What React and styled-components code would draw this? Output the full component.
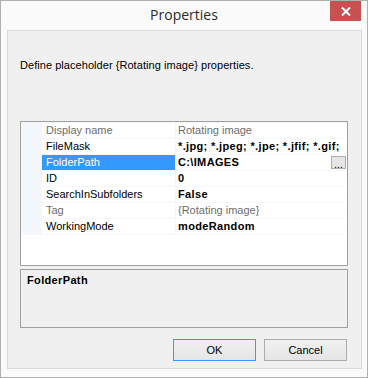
import React from "react";
import styled, { createGlobalStyle } from "styled-components";

const Global = createGlobalStyle`
  html, body { margin: 0; padding: 0; background: #ffffff; }
  body { font-family: "Liberation Sans", Arial, sans-serif; }
  * { box-sizing: border-box; }
`;

const Window = styled.div`
  width: 368px;
  height: 378px;
  border: 1px solid #b0b0b0;
  background: #fafafa;
  display: flex;
  flex-direction: column;
`;

const TitleBar = styled.div`
  height: 29px;
  display: grid;
  grid-template-columns: 1fr auto 1fr;
  align-items: start;
  padding-right: 6px;
`;

const Title = styled.div`
  grid-column: 2;
  font-family: "Open Sans", "Noto Sans", sans-serif;
  font-size: 14px;
  color: #2b2b2b;
  line-height: 28px;
  padding-left: 6px;
`;

const CloseButton = styled.div`
  grid-column: 3;
  justify-self: end;
  width: 31px;
  height: 20px;
  background: #c75050;
  display: flex;
  align-items: center;
  justify-content: center;
`;

const Client = styled.div`
  flex: 1;
  margin: 0 5px 8px 6px;
  border: 1px solid #dadada;
  background: #f0f0f0;
  display: flex;
  flex-direction: column;
  padding: 0 13px 7px 12px;
  font-family: "Liberation Sans", Arial, sans-serif;
  font-size: 11px;
  color: #000;
`;

const Description = styled.div`
  margin-top: 28px;
  height: 13px;
  line-height: 13px;
  letter-spacing: 0.05px;
`;

const Grid = styled.div`
  margin-top: 49px;
  height: 145px;
  border: 1px solid #a0a0a0;
  background: #ffffff;
  display: flex;
  flex-direction: column;
`;

const Rows = styled.div`
  border-top: 1px solid #f4f7fc;
`;

const Row = styled.div`
  display: grid;
  grid-template-columns: 21px 133px 1px 171px;
  height: 16px;
  border-bottom: 1px solid #f4f7fc;
`;

const Gutter = styled.div`
  background: #f4f7fc;
`;

const Sep = styled.div`
  background: #f4f7fc;
`;

const NameCell = styled.div`
  padding-left: 4px;
  line-height: 15px;
  white-space: nowrap;
  overflow: hidden;
  background: ${(p) => (p.$selected ? "#3399ff" : "transparent")};
  color: ${(p) => (p.$selected ? "#ffffff" : p.$readOnly ? "#6d6d6d" : "#000000")};
`;

const ValueCell = styled.div`
  display: flex;
  align-items: flex-start;
  justify-content: space-between;
  padding-left: 2px;
  line-height: 15px;
  white-space: nowrap;
  overflow: hidden;
  font-weight: ${(p) => (p.$bold ? 700 : 400)};
  letter-spacing: ${(p) => (p.$bold ? "0.35px" : "0")};
  color: ${(p) => (p.$readOnly ? "#6d6d6d" : "#000000")};
`;

const EllipsisButton = styled.div`
  width: 15px;
  height: 13px;
  margin: 1px 1px 0 0;
  border: 1px solid #adadad;
  background: #e5e5e5;
  font-weight: 400;
  letter-spacing: 0;
  font-size: 11px;
  line-height: 14px;
  text-align: center;
  color: #000;
  flex-shrink: 0;
`;

const HelpPane = styled.div`
  margin-top: 3px;
  height: 59px;
  border: 1px solid #a0a0a0;
  background: #f0f0f0;
  padding: 3px 0 0 6px;
  font-weight: 700;
  letter-spacing: 0.35px;
  line-height: 14px;
`;

const ButtonRow = styled.div`
  margin-top: auto;
  display: flex;
  justify-content: flex-end;
  gap: 8px;
  padding-right: 1px;
`;

const Button = styled.div`
  width: 83px;
  height: 22px;
  border: 1px solid ${(p) => (p.$default ? "#3c9af5" : "#acacac")};
  background: linear-gradient(#f0f0f0, #e5e5e5);
  display: flex;
  align-items: center;
  justify-content: center;
  font-size: 11px;
  color: #000;
`;

const rows = [
  { name: "Display name", value: "Rotating image", readOnly: true },
  { name: "FileMask", value: "*.jpg; *.jpeg; *.jpe; *.jfif; *.gif;", bold: true },
  { name: "FolderPath", value: "C:\\IMAGES", bold: true, selected: true, button: true },
  { name: "ID", value: "0", bold: true },
  { name: "SearchInSubfolders", value: "False", bold: true },
  { name: "Tag", value: "{Rotating image}", readOnly: true },
  { name: "WorkingMode", value: "modeRandom", bold: true },
];

export default function App() {
  return (
    <>
      <Global />
      <Window>
        <TitleBar>
          <Title>Properties</Title>
          <CloseButton>
            <svg width="10" height="9" viewBox="0 0 10 9">
              <path d="M1 0.5 L9 8.5 M9 0.5 L1 8.5" stroke="#ffffff" strokeWidth="2" fill="none" />
            </svg>
          </CloseButton>
        </TitleBar>
        <Client>
          <Description>Define placeholder {"{Rotating image}"} properties.</Description>
          <Grid>
            <Rows>
              {rows.map((r) => (
                <Row key={r.name}>
                  <Gutter />
                  <NameCell $selected={r.selected} $readOnly={r.readOnly}>
                    {r.name}
                  </NameCell>
                  <Sep />
                  <ValueCell $bold={r.bold} $readOnly={r.readOnly}>
                    <span>{r.value}</span>
                    {r.button && <EllipsisButton>...</EllipsisButton>}
                  </ValueCell>
                </Row>
              ))}
            </Rows>
          </Grid>
          <HelpPane>FolderPath</HelpPane>
          <ButtonRow>
            <Button $default>OK</Button>
            <Button>Cancel</Button>
          </ButtonRow>
        </Client>
      </Window>
    </>
  );
}
